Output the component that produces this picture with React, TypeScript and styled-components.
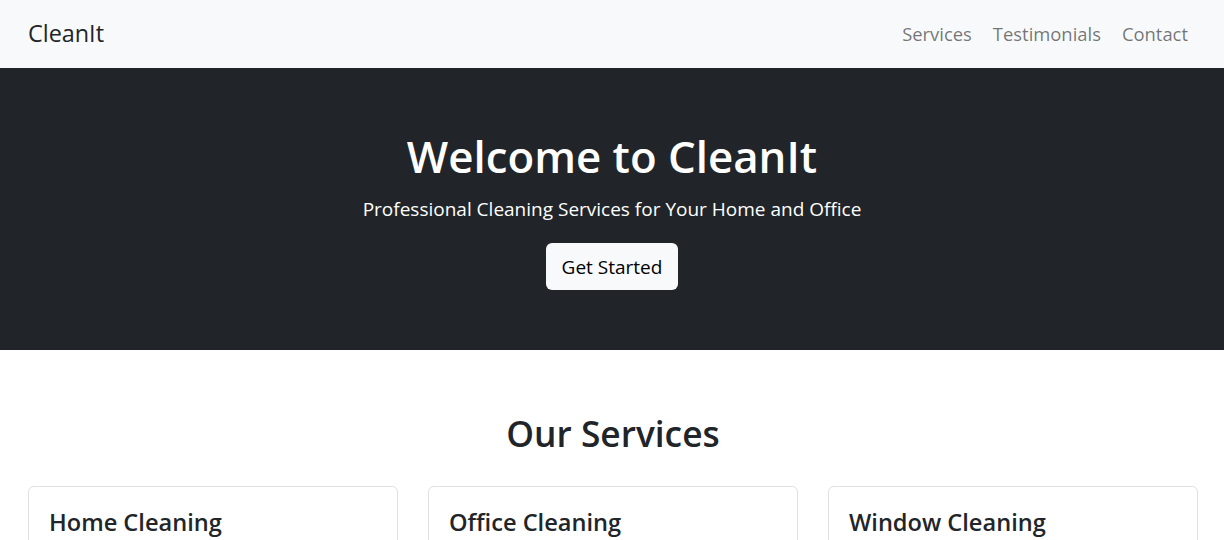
import React from "react";
import styled, { createGlobalStyle } from "styled-components";

const Global = createGlobalStyle`
  html, body { margin: 0; padding: 0; background: #fff; }
  body {
    font-family: "Open Sans", "Noto Sans", Arial, sans-serif;
    color: #212529;
    -webkit-font-smoothing: antialiased;
  }
  * { box-sizing: border-box; }
`;

const Navbar = styled.nav`
  height: 68px;
  background: #f8f9fa;
  display: flex;
  align-items: center;
  justify-content: space-between;
  padding: 0 28px;
`;

const Brand = styled.a`
  font-size: 23.4px;
  color: #212529;
  text-decoration: none;
  padding-bottom: 2px;
`;

const NavLinks = styled.div`
  display: flex;
  align-items: center;
`;

const NavLink = styled.a`
  font-size: 18.4px;
  color: rgba(0, 0, 0, 0.55);
  text-decoration: none;
  padding: 0 8px 2px;
  margin-left: 5px;
`;

const Hero = styled.header`
  background: #212529;
  color: #fff;
  text-align: center;
  padding: 64px 0 60px;
  display: flex;
  flex-direction: column;
  align-items: center;
`;

const HeroTitle = styled.h1`
  font-size: 43.8px;
  font-weight: 600;
  line-height: 48px;
  margin: 0 0 14px;
`;

const Lead = styled.p`
  font-size: 19px;
  line-height: 30px;
  margin: 0 0 19px;
`;

const LightButton = styled.button`
  font-family: inherit;
  font-size: 19px;
  line-height: 30px;
  padding: 8px 16px;
  height: 47px;
  border: none;
  border-radius: 6px;
  background: #f8f9fa;
  color: #000;
  cursor: pointer;
`;

const Section = styled.section`
  padding: 64px 26px 0 28px;
`;

const SectionTitle = styled.h2`
  font-size: 35.3px;
  font-weight: 600;
  line-height: 38px;
  text-align: center;
  margin: 0 0 34px;
`;

const CardGrid = styled.div`
  display: grid;
  grid-template-columns: repeat(3, 1fr);
  gap: 30px;
`;

const Card = styled.div`
  border: 1px solid #dfe0e1;
  border-radius: 6px;
  background: #fff;
  padding: 20px;
  min-height: 200px;
`;

const CardTitle = styled.h4`
  font-size: 23.6px;
  font-weight: 600;
  line-height: 30px;
  margin: 0;
`;

const services = ["Home Cleaning", "Office Cleaning", "Window Cleaning"];

export default function App() {
  return (
    <>
      <Global />
      <Navbar>
        <Brand href="#">CleanIt</Brand>
        <NavLinks>
          <NavLink href="#">Services</NavLink>
          <NavLink href="#">Testimonials</NavLink>
          <NavLink href="#">Contact</NavLink>
        </NavLinks>
      </Navbar>
      <Hero>
        <HeroTitle>Welcome to CleanIt</HeroTitle>
        <Lead>Professional Cleaning Services for Your Home and Office</Lead>
        <LightButton>Get Started</LightButton>
      </Hero>
      <Section>
        <SectionTitle>Our Services</SectionTitle>
        <CardGrid>
          {services.map((s) => (
            <Card key={s}>
              <CardTitle>{s}</CardTitle>
            </Card>
          ))}
        </CardGrid>
      </Section>
    </>
  );
}
